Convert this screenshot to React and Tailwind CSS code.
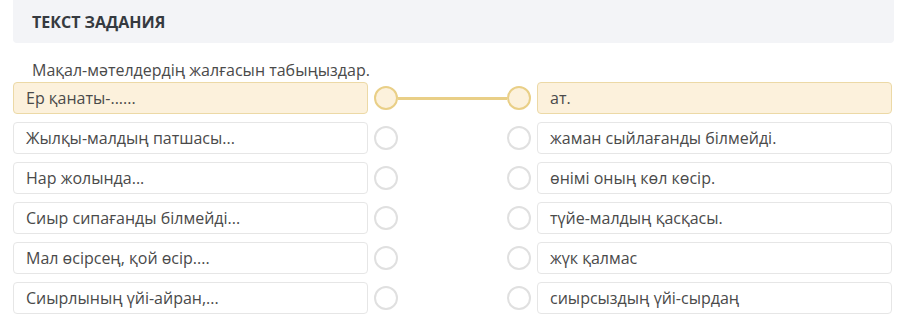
const rows = [
  ["Ер қанаты-......", "ат."],
  ["Жылқы-малдың патшасы...", "жаман сыйлағанды білмейді."],
  ["Нар жолында...", "өнімі оның көл көсір."],
  ["Сиыр сипағанды білмейді...", "түйе-малдың қасқасы."],
  ["Мал өсірсең, қой өсір....", "жүк қалмас"],
  ["Сиырлының үйі-айран,...", "сиырсыздың үйі-сырдаң"],
];

function Box({ text, active }) {
  return (
    <div
      className={
        "w-[355px] h-[32px] flex items-center px-3 rounded border text-[16px] text-[#4a4a4a] " +
        (active ? "bg-[#fcf1dc] border-[#ecd9a6]" : "bg-white border-[#e6e6e6]")
      }
    >
      {text}
    </div>
  );
}

function Dot({ active }) {
  return (
    <div
      className={
        "w-[24px] h-[24px] rounded-full border-2 shrink-0 " +
        (active ? "bg-[#fcf1dc] border-[#e9cf87]" : "bg-white border-[#e0e0e0]")
      }
    />
  );
}

export default function App() {
  return (
    <div className="w-[907px] h-[334px] bg-white font-['Open_Sans',sans-serif] px-[13px] overflow-hidden">
      <div className="h-[43px] bg-[#f3f4f7] rounded-b flex items-center px-[19px]">
        <h2 className="text-[16px] font-bold text-[#353a40]">ТЕКСТ ЗАДАНИЯ</h2>
      </div>
      <p className="mt-[16px] ml-[19px] text-[16px] leading-[23px] text-[#4a4a4a]">
        Мақал-мәтелдердің жалғасын табыңыздар.
      </p>
      <div className="flex flex-col gap-[8px]">
        {rows.map(([left, right], i) => (
          <div key={i} className="flex items-center">
            <Box text={left} active={i === 0} />
            <div className="w-[6px]" />
            <Dot active={i === 0} />
            <div className="w-[109px] flex items-center">
              {i === 0 && <div className="h-[3px] w-full bg-[#e9cf87]" />}
            </div>
            <Dot active={i === 0} />
            <div className="w-[6px]" />
            <Box text={right} active={i === 0} />
          </div>
        ))}
      </div>
    </div>
  );
}
